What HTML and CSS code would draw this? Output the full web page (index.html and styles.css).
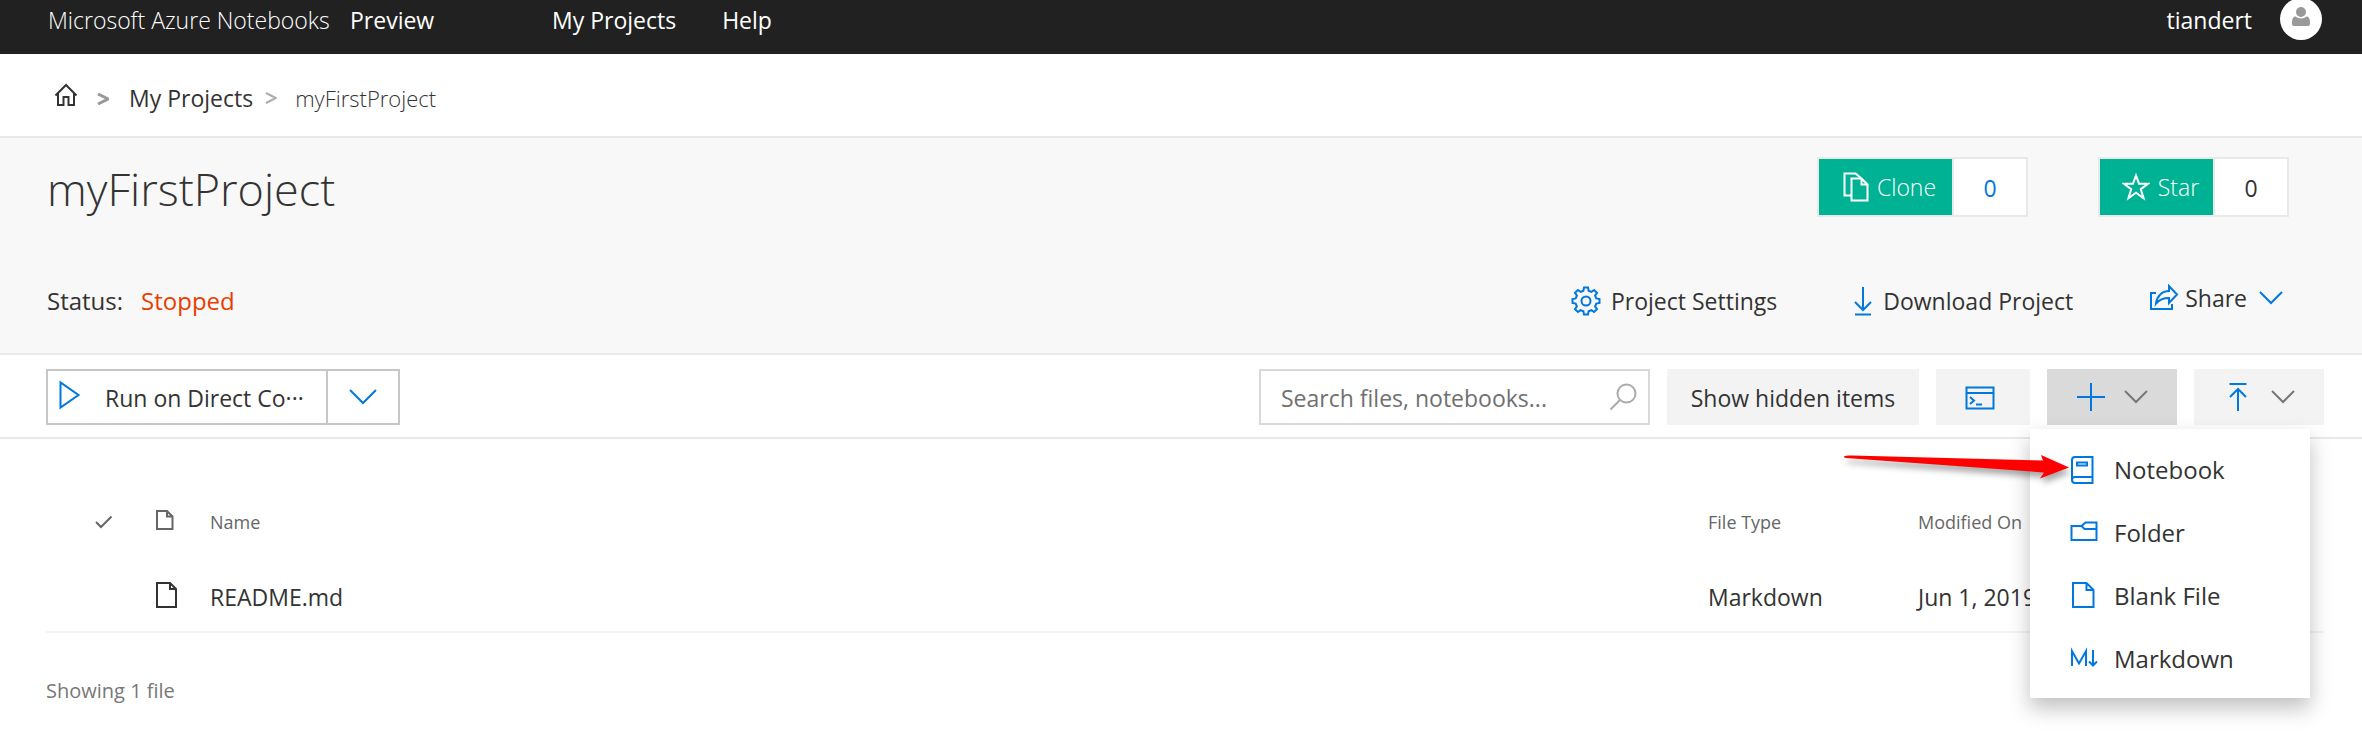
FILE: index.html
```html
<!DOCTYPE html>
<html lang="en">
<head>
<meta charset="utf-8">
<title>myFirstProject - Microsoft Azure Notebooks</title>
<link rel="stylesheet" href="styles.css">
</head>
<body>
<header class="topbar">
  <a class="brand" href="#">Microsoft Azure Notebooks</a>
  <a class="preview" href="#">Preview</a>
  <nav class="topnav">
    <a href="#">My Projects</a>
    <a href="#">Help</a>
  </nav>
  <a class="user" href="#">tiandert</a>
  <a class="avatar" href="#" aria-label="Account">
    <svg width="20" height="20" viewBox="0 0 20 20"><path d="M4.500 9.500C2 9.500 1 12 1 16v1q0 2 2 2h14q2 0 2-2v-1c0-4-1-6.500-3.500-6.500Q13 11.500 10 11.500T4.500 9.500z" fill="#999"/><circle cx="10" cy="5" r="5" fill="#999"/></svg>
  </a>
</header>

<nav class="crumbs" aria-label="Breadcrumb">
  <a class="home" href="#" aria-label="Home"><svg class="line" width="24" height="24" viewBox="0 0 24 24"><path d="M1.500 12.500 12 2l10.500 10.500M4 10.500V22h5.500v-8h5v8H20V10.500"/></svg></a>
  <svg class="sep bold" width="12" height="12" viewBox="0 0 12 12"><path d="M1 1l10 5-10 5"/></svg>
  <a class="crumb" href="#">My Projects</a>
  <svg class="sep" width="12" height="12" viewBox="0 0 12 12"><path d="M1 1l10 5-10 5"/></svg>
  <span class="current">myFirstProject</span>
</nav>

<section class="project">
  <div class="title-row">
    <h1>myFirstProject</h1>
    <div class="counter clone">
      <button type="button"><svg width="26" height="30" viewBox="0 0 26 30"><path d="M8 23.500H1.500v-22h11l6 5M8.500 6.500h10l6 6v16h-16zM18.500 6.500v6h6"/></svg>Clone</button>
      <a href="#">0</a>
    </div>
    <div class="counter star">
      <button type="button"><svg width="28" height="28" viewBox="0 0 28 28"><path d="M14 2.500l3 8.200h9l-7.200 5.500 2.800 9-7.600-5.500-7.600 5.500 2.800-9L2 10.700h9z"/></svg>Star</button>
      <span>0</span>
    </div>
  </div>
  <div class="status-row">
    <span>Status:</span>
    <span class="stopped">Stopped</span>
    <div class="actions">
      <button type="button"><svg class="blue" width="30" height="30" viewBox="0 0 30 30"><path d="M12.400 4.700 13 1.500h4l.6 3.200 2.800 1.200 2.700-1.900 2.900 2.900-1.900 2.700 1.200 2.800 3.200.6v4l-3.200.6-1.200 2.800 1.900 2.700-2.900 2.900-2.700-1.900-2.800 1.200-.6 3.200h-4l-.6-3.200-2.800-1.200-2.700 1.900L4 23.100l1.900-2.700-1.200-2.800-3.200-.6v-4l3.200-.6 1.200-2.800L4 6.900 6.900 4l2.700 1.900z"/><circle cx="15" cy="15" r="4.500"/></svg>Project Settings</button>
      <button type="button"><svg class="blue" width="20" height="30" viewBox="0 0 20 30"><path d="M10 1v23M2 16l8 8 8-8M2 28.500h16"/></svg>Download Project</button>
      <button type="button" class="share"><svg class="blue" width="30" height="28" viewBox="0 0 30 28"><path d="M7 9H2v16h21v-5M7 19.500C8 12 13 7 20 7V2l8 8.500-8 8.500v-5c-6 0-10 2-13 5.500z"/></svg>Share<svg class="blue chev" width="24" height="14" viewBox="0 0 24 14"><path d="M1 1l11 11L23 1"/></svg></button>
    </div>
  </div>
</section>

<div class="toolbar">
  <div class="run">
    <button type="button" class="run-main"><svg class="blue" width="22" height="30" viewBox="0 0 22 30"><path d="M1.500 2.500v25l18-12.500z"/></svg><span>Run on Direct Co···</span></button>
    <button type="button" class="run-more" aria-label="Choose compute"><svg class="blue" width="28" height="16" viewBox="0 0 28 16"><path d="M1 1l13 13L27 1"/></svg></button>
  </div>
  <label class="search">
    <input type="text" placeholder="Search files, notebooks..." aria-label="Search files, notebooks">
    <svg width="28" height="28" viewBox="0 0 28 28"><circle cx="17.500" cy="10.500" r="9"/><path d="M11 17 1.500 26.500"/></svg>
  </label>
  <button type="button" class="tool hidden-items">Show hidden items</button>
  <button type="button" class="tool terminal" aria-label="Terminal"><svg class="blue" width="30" height="26" viewBox="0 0 30 26"><path d="M1.500 2.500h27v21h-27zM1.500 8h27M5 12l4 3.500L5 19M11 19.500h6"/></svg></button>
  <div class="add">
    <button type="button" class="tool pressed" aria-label="New" aria-expanded="true"><svg class="blue" width="30" height="30" viewBox="0 0 30 30"><path d="M15 1v28M1 15h28"/></svg><svg class="gray" width="24" height="14" viewBox="0 0 24 14"><path d="M1 1l11 11L23 1"/></svg></button>
    <div class="menu">
      <button type="button"><svg class="blue" width="28" height="28" viewBox="0 0 28 28"><path d="M22.500 27v-26H5Q2 1 2 4v20q0 3 3 3h17.500zM2 24q0-3 3-3h17.500M7 6.500h10v3H7z"/></svg>Notebook</button>
      <button type="button"><svg class="blue" width="28" height="28" viewBox="0 0 28 28"><path d="M1.500 7h10l4-3.500h11V21h-25zM11.500 7l3 3h12"/></svg>Folder</button>
      <button type="button"><svg class="blue" width="28" height="28" viewBox="0 0 28 28"><path d="M3 1h13.500l7 7v17H3zM16.500 1v7h7"/></svg>Blank File</button>
      <button type="button"><svg class="blue" width="28" height="28" viewBox="0 0 28 28"><path d="M2 21V6L9 18.500 16 6v15M23 5v15.500M19 16.500l4 4 4-4"/></svg>Markdown</button>
    </div>
    <svg class="pointer" width="236" height="40" viewBox="0 0 236 40"><path d="M4 9.500Q6 8 12 8.500L203 13.500 201 8 229 20.500 200 31.500 204 25.500 6 11Q3 10.500 4 9.500z" fill="#f00"/></svg>
  </div>
  <button type="button" class="tool" aria-label="Upload"><svg class="blue" width="30" height="30" viewBox="0 0 30 30"><path d="M6.500 2h17M15 29V7M7 15l8-8 8 8"/></svg><svg class="gray" width="24" height="14" viewBox="0 0 24 14"><path d="M1 1l11 11L23 1"/></svg></button>
</div>

<main class="files">
  <table>
    <colgroup><col class="c-check"><col class="c-icon"><col><col class="c-type"><col class="c-date"></colgroup>
    <thead>
      <tr>
        <th class="check"><svg class="line" width="18" height="14" viewBox="0 0 18 14"><path d="M1 7l5 5L16.500 1.500"/></svg></th>
        <th><svg class="line" width="18" height="26" viewBox="0 0 18 26"><path d="M1 2h10l5.500 5.500V20H1zM11 2v5.500h5.500"/></svg></th>
        <th>Name</th><th>File Type</th><th>Modified On</th>
      </tr>
    </thead>
    <tbody>
      <tr>
        <td></td>
        <td><svg class="line" width="22" height="32" viewBox="0 0 22 32"><path d="M1 2h13l6 6v18H1zM14 2v6h6"/></svg></td>
        <td><a href="#">README.md</a></td><td>Markdown</td><td>Jun 1, 2019</td>
      </tr>
    </tbody>
  </table>
  <p class="summary">Showing 1 file</p>
</main>
</body>
</html>
```

FILE: styles.css
```css
* { box-sizing: border-box; }

body {
  margin: 0;
  background: #fff;
  color: #333;
  font: 23px/36px "Open Sans", "Noto Sans", sans-serif;
}

a { color: inherit; text-decoration: none; }

button {
  display: flex;
  align-items: center;
  padding: 0;
  border: 0;
  background: none;
  color: inherit;
  font: inherit;
  white-space: nowrap;
  cursor: pointer;
}

svg {
  display: block;
  flex: none;
  fill: none;
  stroke-width: 2;
}

.blue { stroke: #0078de; }
.gray { stroke: #777; }
.line { stroke: currentColor; }

/* Top bar */
.topbar {
  display: flex;
  align-items: center;
  height: 54px;
  padding: 0 40px 14px 48px;
  background: #212121;
  color: #fff;
}
.brand { width: 302px; font-weight: 300; white-space: nowrap; }
.preview { width: 202px; }
.topnav { display: flex; gap: 46px; flex: 1; }
.user { margin-right: 28px; }
.avatar {
  display: flex;
  justify-content: center;
  width: 42px;
  height: 42px;
  margin-bottom: 2px;
  padding-top: 9px;
  border-radius: 50%;
  background: #fff;
}

/* Breadcrumb */
.crumbs {
  display: flex;
  align-items: center;
  height: 84px;
  padding: 6px 54px 0;
  border-bottom: 2px solid #e9e9e9;
}
.home { padding-bottom: 6px; }
.sep { margin: 0 18px 0 12px; stroke: #aaa; }
.sep.bold { margin: 2px 20px 0 19px; stroke: #999; stroke-width: 3; }
.current { font-size: 22px; font-weight: 300; }

/* Project header */
.project {
  padding: 19px 73px 32px 47px;
  border-bottom: 2px solid #e9e9e9;
  background: #f8f8f8;
}
.title-row { display: flex; align-items: center; }
h1 {
  flex: 1;
  margin: 0;
  padding-top: 4px;
  font-size: 45px;
  font-weight: 300;
  line-height: 56px;
}
.counter {
  display: flex;
  gap: 2px;
  height: 60px;
  border: 2px solid #e9e9e9;
  background: #e9e9e9;
}
.counter + .counter { margin-left: 70px; }
.counter button {
  gap: 8px;
  justify-content: center;
  background: #00b294;
  color: #fff;
  font-weight: 300;
}
.clone button { width: 133px; padding-left: 8px; }
.star button { width: 113px; padding-left: 8px; }
.counter svg { stroke: #fff; }
.counter a, .counter span {
  width: 72px;
  background: #fff;
  line-height: 58px;
  text-align: center;
}
.counter a { color: #0078de; }

.status-row {
  display: flex;
  align-items: center;
  height: 40px;
  margin-top: 64px;
  font-size: 24px;
}
.stopped { margin-left: 18px; color: #eb3c00; }
.actions {
  display: flex;
  gap: 76px;
  margin-left: auto;
  padding-right: 6px;
  font-size: 23px;
}
.actions button { gap: 10px; }
.actions .share { gap: 6px; padding-bottom: 6px; }
.chev { margin-left: 6px; }

/* Toolbar */
.toolbar {
  display: flex;
  gap: 17px;
  padding: 14px 38px 12px 46px;
  border-bottom: 2px solid #e9e9e9;
}
.run {
  display: flex;
  width: 354px;
  height: 56px;
  margin-right: auto;
  border: 2px solid #c6c6c6;
}
.run-main { flex: 1; padding-left: 11px; }
.run-main svg { margin-bottom: 4px; }
.run-main span { margin-left: 24px; padding-top: 2px; }
.run-more {
  justify-content: center;
  width: 72px;
  border-left: 2px solid #c6c6c6;
}
.search {
  display: flex;
  align-items: center;
  width: 391px;
  padding: 0 11px 0 20px;
  border: 2px solid #d9d9d9;
}
.search input {
  flex: 1;
  min-width: 0;
  padding: 2px 0 0;
  border: 0;
  outline: 0;
  background: none;
  color: #333;
  font: inherit;
}
.search input::placeholder { color: #707070; opacity: 1; }
.search svg { stroke: #aaa; }
.tool {
  gap: 18px;
  justify-content: center;
  width: 130px;
  height: 56px;
  background: #f3f3f3;
}
.hidden-items { width: 252px; padding-top: 2px; }
.terminal { width: 94px; padding: 2px 6px 0 0; }
.pressed { background: #dadada; }

/* New-item menu */
.add { position: relative; }
.menu {
  position: absolute;
  top: 60px;
  left: -17px;
  z-index: 1;
  width: 280px;
  padding: 9px 0 8px;
  background: #fff;
  box-shadow: 0 10px 20px rgba(0, 0, 0, .25);
  font-size: 24px;
}
.menu button {
  gap: 16px;
  width: 100%;
  height: 63px;
  padding-left: 40px;
}
.pointer {
  position: absolute;
  top: 78px;
  right: 101px;
  z-index: 2;
  filter: drop-shadow(2px 5px 3px rgba(0, 0, 0, .35));
}

/* File list */
.files { padding: 43px 38px 32px 46px; }
table {
  width: 100%;
  border-collapse: collapse;
  table-layout: fixed;
}
.c-check { width: 110px; }
.c-icon { width: 54px; }
.c-type { width: 210px; }
.c-date { width: 406px; }
th, td { padding: 0; text-align: left; vertical-align: middle; }
th {
  height: 80px;
  color: #666;
  font-size: 18px;
  font-weight: 400;
}
.check { padding-left: 49px; }
td { height: 70px; border-bottom: 2px solid #f3f3f3; }
.summary {
  margin: 40px 0 0;
  color: #777;
  font-size: 20px;
}
```
